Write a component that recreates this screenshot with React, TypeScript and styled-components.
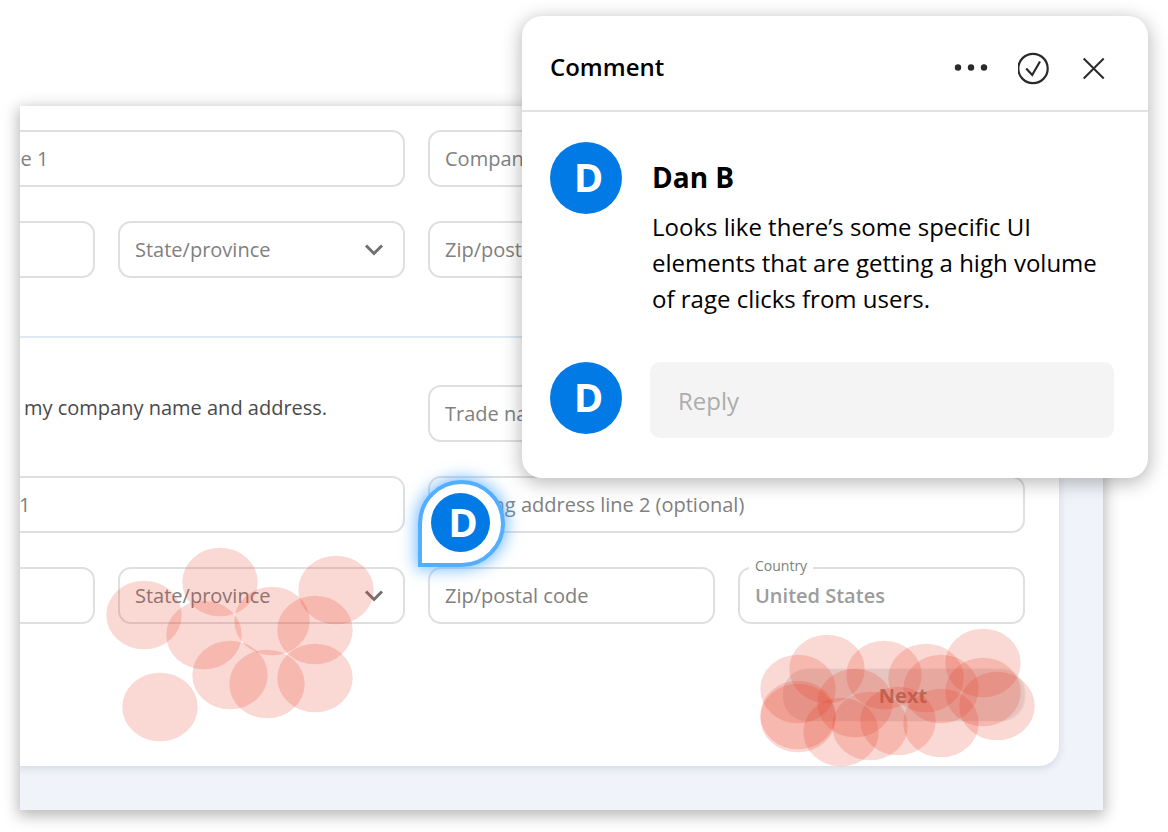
import React from "react";
import styled, { createGlobalStyle } from "styled-components";

const Global = createGlobalStyle`
  *, *::before, *::after { box-sizing: border-box; }
  body { margin: 0; background: #fff; color: #000; font-family: "Open Sans", "Noto Sans", sans-serif; }
  button, input, select { font: inherit; }
`;

const Page = styled.main`
  position: relative;
  min-height: 100vh;
  padding: 106px 65px 22px 20px;
`;

const Panel = styled.section`
  overflow: hidden;
  padding: 0 44px 44px 0;
  background: #f0f3f9;
`;

const PanelShadow = styled.div`
  box-shadow: 0 4px 14px 2px rgba(0, 0, 0, 0.28);
`;

const FormCard = styled.form`
  margin-left: -212px;
  padding: 24px 34px 45px 0;
  background: #fff;
  border-radius: 0 0 20px 0;
  box-shadow: 0 2px 8px rgba(60, 70, 110, 0.16);
`;

const Grid = styled.div`
  display: grid;
  grid-template-columns: repeat(4, minmax(0, 1fr));
  gap: 34px 23px;
`;

const Divider = styled.hr`
  height: 2px;
  margin: 58px -34px 47px 0;
  border: 0;
  background: #dfe9f5;
`;

const Cell = styled.div<{ $span?: number }>`
  position: relative;
  grid-column: span ${(p) => p.$span ?? 1};
`;

const TextField = styled.input`
  display: block;
  width: 100%;
  height: 57px;
  padding: 0 15px;
  border: 2px solid #dfdfdf;
  border-radius: 13px;
  background: #fff;
  color: #808080;
  font-size: 20px;
  &::placeholder { color: #808080; opacity: 1; }
`;

const SelectField = styled.select<{ $strong?: boolean }>`
  display: block;
  width: 100%;
  height: 57px;
  padding: 0 15px;
  border: 2px solid #dfdfdf;
  border-radius: 13px;
  appearance: none;
  background: #fff;
  color: ${(p) => (p.$strong ? "#9c9c9c" : "#808080")};
  font-size: 20px;
  font-weight: ${(p) => (p.$strong ? 600 : 400)};
`;

const Chevron = styled.svg`
  position: absolute;
  top: 22px;
  right: 21px;
  pointer-events: none;
`;

const FloatingLabel = styled.label`
  position: absolute;
  top: -10px;
  left: 11px;
  padding: 0 6px;
  background: #fff;
  color: #808080;
  font-size: 14px;
  line-height: 18px;
`;

const Statement = styled.p`
  grid-column: span 2;
  margin: 0;
  padding: 9px 0 0 216px;
  color: #4a4a4a;
  font-size: 20px;
  line-height: 28px;
  white-space: nowrap;
`;

const Actions = styled.div`
  display: flex;
  justify-content: flex-end;
  margin-top: 45px;
  padding-right: 2px;
`;

const ButtonWrap = styled.div`
  position: relative;
`;

const NextButton = styled.button`
  display: block;
  width: 240px;
  height: 52px;
  border: 0;
  border-radius: 24px;
  background: #e6e6e6;
  box-shadow: 2px 0 2px rgba(0, 0, 0, 0.1);
  color: #998c8a;
  font-size: 20px;
  font-weight: 700;
`;

const Heat = styled.svg<{ $x: number; $y: number }>`
  position: absolute;
  left: ${(p) => p.$x}px;
  top: ${(p) => p.$y}px;
  z-index: 1;
  pointer-events: none;
`;

const Pin = styled.div`
  position: absolute;
  left: -10px;
  top: 4px;
  z-index: 2;
  display: flex;
  align-items: center;
  justify-content: center;
  width: 87px;
  height: 87px;
  padding: 0 2px 2px 0;
  border: 4px solid #52aeff;
  border-radius: 50% 50% 50% 0;
  background: #fff;
  box-shadow: 0 0 16px 2px rgba(60, 160, 255, 0.7);
`;

const Avatar = styled.span<{ $size: number }>`
  display: flex;
  flex: none;
  align-items: center;
  justify-content: center;
  width: ${(p) => p.$size}px;
  height: ${(p) => p.$size}px;
  padding: 0 0 2px 5px;
  border-radius: 50%;
  background: #027ae6;
  color: #fff;
  font-size: 40px;
  font-weight: 700;
  line-height: 1;
`;

const CommentCard = styled.aside`
  position: absolute;
  top: 16px;
  right: 20px;
  z-index: 3;
  width: 626px;
  border-radius: 20px;
  background: #fff;
  box-shadow: 0 4px 18px 2px rgba(0, 0, 0, 0.26);
`;

const CommentHeader = styled.header`
  display: flex;
  align-items: center;
  justify-content: space-between;
  height: 96px;
  padding: 8px 38px 0 28px;
  border-bottom: 2px solid #e2e2e2;
`;

const CommentTitle = styled.h2`
  margin: 0;
  font-size: 24px;
  font-weight: 600;
  line-height: 32px;
`;

const IconRow = styled.div`
  display: flex;
  align-items: center;
  gap: 24px;
  padding-top: 4px;
`;

const IconButton = styled.button`
  display: flex;
  padding: 0;
  border: 0;
  background: none;
  color: #2a2a2a;
`;

const Thread = styled.div`
  display: grid;
  grid-template-columns: 72px 1fr;
  gap: 44px 28px;
  padding: 30px 34px 40px 28px;
`;

const Message = styled.div`
  padding: 15px 0 1px 2px;
`;

const Author = styled.h3`
  margin: 0;
  font-size: 28px;
  font-weight: 700;
  line-height: 40px;
`;

const Body = styled.p`
  margin: 12px 0 0;
  font-size: 24px;
  line-height: 36px;
`;

const Reply = styled.input`
  width: 100%;
  height: 76px;
  padding: 0 28px;
  border: 0;
  border-radius: 10px;
  background: #f4f4f4;
  font-size: 24px;
  &::placeholder { color: #adadad; opacity: 1; }
`;

type Point = [number, number];

const stateClicks: Point[] = [
  [38, 68], [114, 35], [98, 88], [166, 74], [230, 43],
  [209, 83], [124, 128], [161, 137], [209, 131], [54, 160],
];

const nextClicks: Point[] = [
  [67, 41], [38, 61], [124, 47], [166, 50], [181, 61], [223, 35], [223, 64], [237, 78],
  [38, 87], [38, 90], [95, 75], [81, 104], [110, 98], [138, 93], [181, 95],
];

const HeatMap = ({ points, x, y }: { points: Point[]; x: number; y: number }) => (
  <Heat $x={x} $y={y} width="276" height="196" viewBox="0 0 276 196" aria-hidden="true">
    {points.map(([cx, cy], i) => (
      <ellipse key={i} cx={cx} cy={cy} rx="37.7" ry="34.3" fill="#e63c23" fillOpacity="0.2" />
    ))}
  </Heat>
);

const StateSelect = ({ name }: { name: string }) => (
  <>
    <SelectField aria-label={name} defaultValue="">
      <option value="">State/province</option>
    </SelectField>
    <Chevron width="20" height="14" viewBox="0 0 20 14" fill="none" stroke="#707070" strokeWidth="3" aria-hidden="true">
      <path d="M2 2.5 10 10.5 18 2.5" />
    </Chevron>
  </>
);

export default function App() {
  return (
    <>
      <Global />
      <Page>
        <PanelShadow>
          <Panel>
            <FormCard onSubmit={(e) => e.preventDefault()}>
              <Grid>
                <Cell $span={2}><TextField aria-label="Company address line 1" placeholder="Company address line 1" /></Cell>
                <Cell $span={2}><TextField aria-label="Company address line 2" placeholder="Company address line 2" /></Cell>
                <Cell><TextField aria-label="City" /></Cell>
                <Cell><StateSelect name="Company state or province" /></Cell>
                <Cell><TextField aria-label="Company zip" placeholder="Zip/postal code" /></Cell>
              </Grid>
              <Divider />
              <Grid>
                <Statement>my company name and address.</Statement>
                <Cell $span={2}><TextField aria-label="Trade name" placeholder="Trade name" /></Cell>
                <Cell $span={2}><TextField aria-label="Trading address line 1" placeholder="Trading address line 1" /></Cell>
                <Cell $span={2}>
                  <TextField aria-label="Trading address line 2" placeholder="Trading address line 2 (optional)" />
                  <Pin><Avatar $size={59}>D</Avatar></Pin>
                </Cell>
                <Cell><TextField aria-label="Trading city" /></Cell>
                <Cell>
                  <StateSelect name="Trading state or province" />
                  <HeatMap points={stateClicks} x={-12} y={-20} />
                </Cell>
                <Cell><TextField aria-label="Trading zip" placeholder="Zip/postal code" /></Cell>
                <Cell>
                  <SelectField id="country" $strong defaultValue="us">
                    <option value="us">United States</option>
                  </SelectField>
                  <FloatingLabel htmlFor="country">Country</FloatingLabel>
                </Cell>
              </Grid>
              <Actions>
                <ButtonWrap>
                  <NextButton type="submit">Next</NextButton>
                  <HeatMap points={nextClicks} x={-23} y={-41} />
                </ButtonWrap>
              </Actions>
            </FormCard>
          </Panel>
        </PanelShadow>

        <CommentCard aria-label="Comment thread">
          <CommentHeader>
            <CommentTitle>Comment</CommentTitle>
            <IconRow>
              <IconButton type="button" aria-label="More">
                <svg width="44" height="36" viewBox="0 0 44 36" fill="currentColor">
                  <circle cx="8" cy="16.5" r="3.2" />
                  <circle cx="21" cy="16.5" r="3.2" />
                  <circle cx="34" cy="16.5" r="3.2" />
                </svg>
              </IconButton>
              <IconButton type="button" aria-label="Resolve">
                <svg width="36" height="36" viewBox="0 0 36 36" fill="none" stroke="currentColor" strokeWidth="2.2">
                  <circle cx="15" cy="17.5" r="14.7" />
                  <path d="M8.2 17.5 14.2 24 22 10.5" />
                </svg>
              </IconButton>
              <IconButton type="button" aria-label="Close">
                <svg width="32" height="36" viewBox="0 0 32 36" fill="none" stroke="currentColor" strokeWidth="2">
                  <path d="M5.7 7.5 25.7 27.5M25.7 7.5 5.7 27.5" />
                </svg>
              </IconButton>
            </IconRow>
          </CommentHeader>
          <Thread>
            <Avatar $size={72}>D</Avatar>
            <Message>
              <Author>Dan B</Author>
              <Body>Looks like there’s some specific UI elements that are getting a high volume of rage clicks from users.</Body>
            </Message>
            <Avatar $size={72}>D</Avatar>
            <Reply aria-label="Reply" placeholder="Reply" />
          </Thread>
        </CommentCard>
      </Page>
    </>
  );
}
